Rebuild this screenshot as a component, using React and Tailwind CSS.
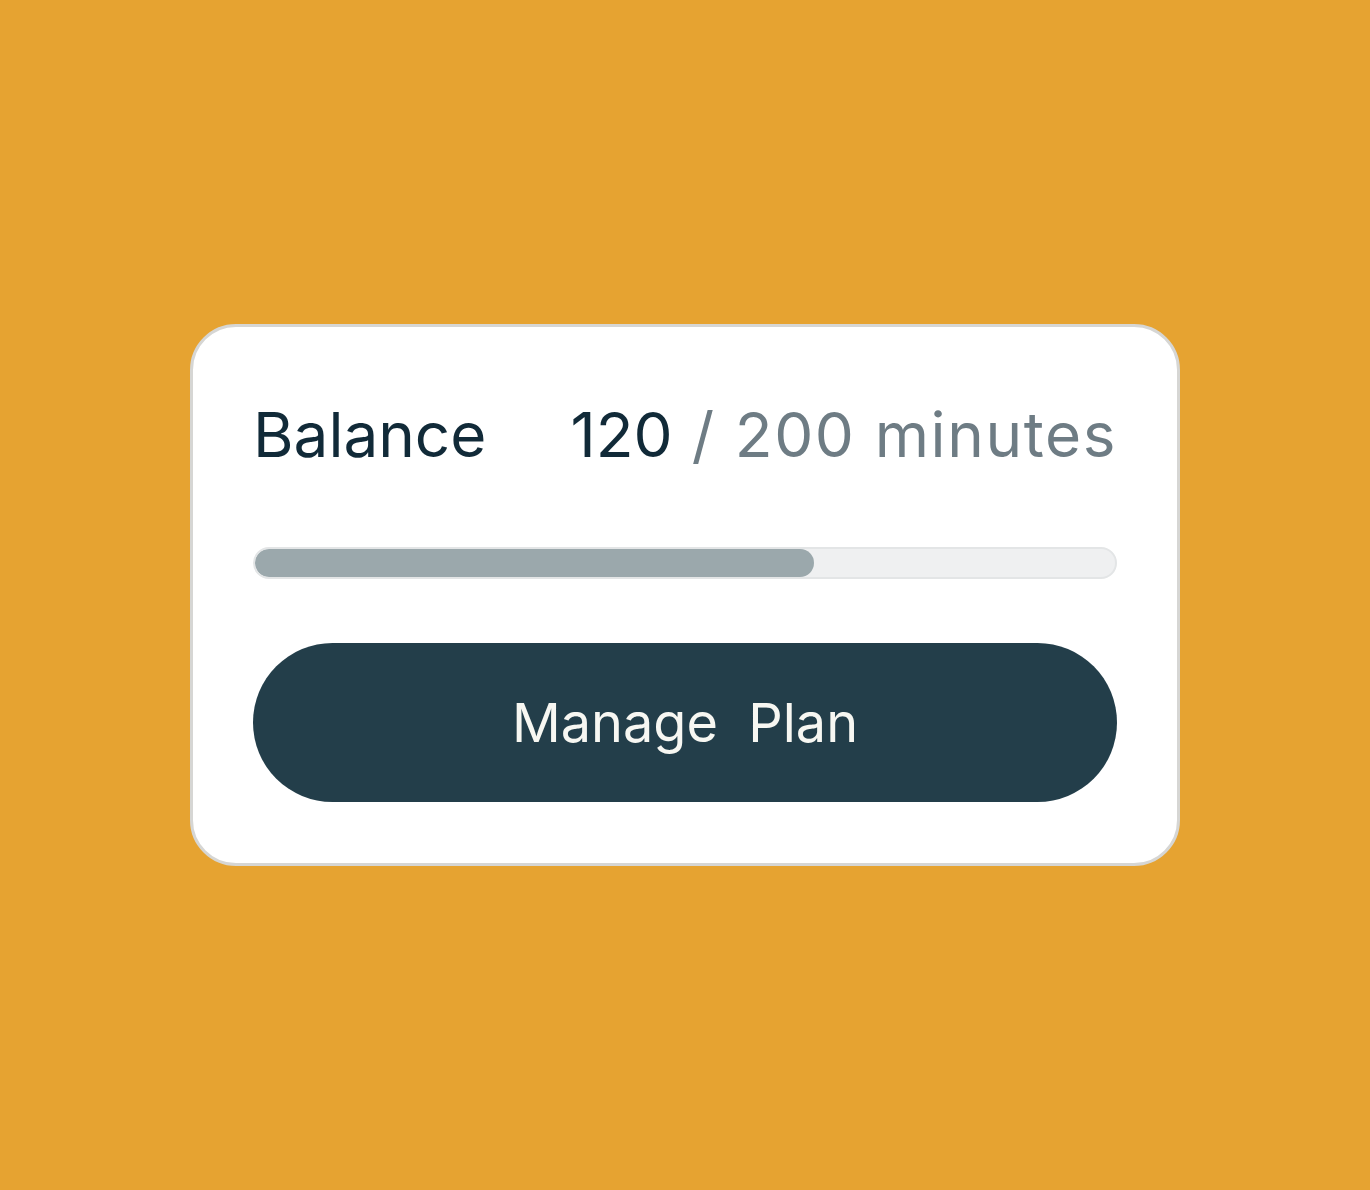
import React from 'react';

function BalanceCard({ used, total, fill }) {
  return (
    <div className="w-[990px] bg-white border-[3px] border-[#d6d6d4] rounded-[46px] px-[60px] pt-[60px] pb-[61px]">
      <div className="flex items-baseline justify-between leading-[96px]">
        <span className="text-[62px] text-[#112a38]">Balance</span>
        <span className="text-[62px] text-[#6e7c84]">
          <span className="text-[#112a38]">{used}</span>
          <span className="tracking-[1.6px]"> / {total} minutes</span>
        </span>
      </div>

      <div className="mt-[64px] h-[32px] rounded-full bg-[#eff0f1] border-2 border-[#e3e5e6] overflow-hidden">
        <div className="h-full rounded-full bg-[#9ba8ac]" style={{ width: `${fill}%` }} />
      </div>

      <button className="mt-[64px] w-full h-[159px] rounded-full bg-[#233e4a] text-[#f7f7f2] text-[54px] leading-none">
        Manage&nbsp; Plan
      </button>
    </div>
  );
}

export default function App() {
  return (
    <div
      className="min-h-screen w-full bg-[#e6a331] flex items-center justify-center"
      style={{ fontFamily: 'Inter, "Noto Sans", sans-serif' }}
    >
      <BalanceCard used={120} total={200} fill={65} />
    </div>
  );
}
